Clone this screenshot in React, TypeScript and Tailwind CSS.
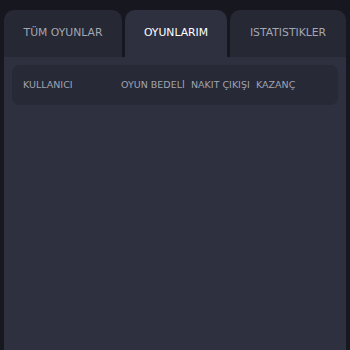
import React from "react";

export default function App() {
  const tabs = [
    { label: "TÜM OYUNLAR", active: false, w: "w-[118px]" },
    { label: "OYUNLARIM", active: true, w: "w-[102px]" },
    { label: "ISTATISTIKLER", active: false, w: "w-[116px]" },
  ];
  return (
    <div
      className="w-[350px] h-[350px] overflow-hidden bg-[#17181f] pt-[10px] px-[4px]"
      style={{ fontFamily: '"DejaVu Sans", sans-serif' }}
    >
      <div className="flex gap-[3px]">
        {tabs.map((t) => (
          <div
            key={t.label}
            className={`${t.w} h-[47px] rounded-t-[10px] flex items-center justify-center text-[10.8px] ${
              t.active ? "bg-[#2e303f] text-white" : "bg-[#262834] text-[#a3a6b3]"
            }`}
          >
            {t.label}
          </div>
        ))}
      </div>
      <div className="bg-[#2e303f] h-[300px] px-[8px] pt-[8px]">
        <div className="h-[40px] rounded-[8px] bg-[#272936] flex items-center pl-[11px] text-[9.5px] text-[#a0a3b0]">
          <div className="w-[98px]">KULLANICI</div>
          <div className="w-[70px]">OYUN BEDELİ</div>
          <div className="w-[65px]">NAKIT ÇIKIŞI</div>
          <div>KAZANÇ</div>
        </div>
      </div>
    </div>
  );
}
